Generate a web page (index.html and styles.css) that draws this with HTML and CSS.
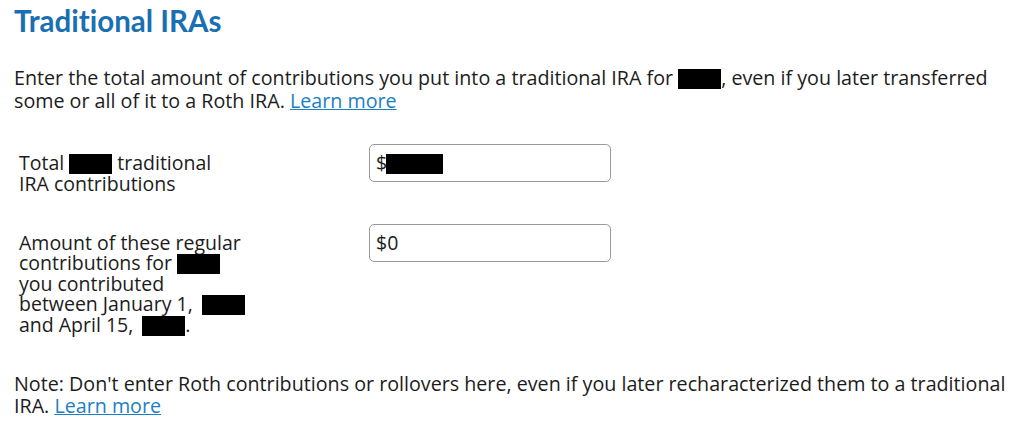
FILE: index.html
```html
<!DOCTYPE html>
<html lang="en">
<head>
    <meta charset="UTF-8">
    <title>Traditional IRAs</title>
    <meta name="viewport" content="width=device-width, initial-scale=1.0">
    <link rel="stylesheet" href="styles.css">
</head>
<body>
    <main class="page">
        <h1>Traditional IRAs</h1>
        <p class="intro">
            Enter the total amount of contributions you put into a traditional IRA for <span class="redact redact-year"></span>, even if you later transferred<br>
            some or all of it to a Roth IRA. <a href="#">Learn more</a>
        </p>

        <!-- contribution rows -->
        <div class="field-row first">
            <label class="field-label" for="totalContrib">Total <span class="redact"></span> traditional<br>IRA contributions</label>
            <div class="field-box" id="totalContrib">$<span class="redact redact-amount"></span></div>
        </div>
        <div class="field-row">
            <label class="field-label" for="earlyContrib">Amount of these regular<br>contributions for <span class="redact"></span><br>you contributed<br>between January 1, <span class="redact redact-wide"></span><br>and April 15, <span class="redact redact-wide"></span>.</label>
            <div class="field-box" id="earlyContrib">$0</div>
        </div>

        <p class="note">
            Note: Don't enter Roth contributions or rollovers here, even if you later recharacterized them to a traditional<br>
            IRA. <a href="#">Learn more</a>
        </p>
    </main>
</body>
</html>
```

FILE: styles.css
```css
:root {
    --title-blue: #1a6fb3;
    --link-blue: #1d7fc0;
    --text: #1c1c1c;
    --box-border: #9a9a9a;
}
body {
    margin: 0;
    background: #fff;
    color: var(--text);
    font-family: "Open Sans", Lato, sans-serif;
    font-variant-ligatures: none;
}
.page {
    padding: 0 14px;
}
h1 {
    margin: 0;
    padding-top: 2px;
    font-family: Lato, sans-serif;
    font-size: 29.5px;
    font-weight: bold;
    line-height: 38px;
    color: var(--title-blue);
}
.intro {
    margin: 26px 0 0 0;
    font-size: 19.7px;
    line-height: 23px;
    white-space: nowrap;
}
a {
    color: var(--link-blue);
    text-decoration: underline;
}
/* redacted bits */
.redact {
    display: inline-block;
    width: 43px;
    height: 20px;
    background: #000;
    vertical-align: -4px;
}
.redact-wide {
    margin-left: 4px;
}
.redact-amount {
    width: 57px;
    margin-left: -1px;
}
.field-row {
    display: grid;
    grid-template-columns: 355px 242px;
    margin-top: 30px;
}
.field-row.first {
    margin-top: 32px;
}
.field-label {
    padding: 9px 0 0 5px;
    font-size: 19.5px;
    line-height: 20px;
}
.field-box {
    height: 36px;
    border: 1px solid var(--box-border);
    border-radius: 5px;
    padding: 0 6px;
    font-size: 19.5px;
    line-height: 36px;
}
.note {
    margin: 37px 0 0 0;
    font-size: 19.7px;
    line-height: 22px;
    white-space: nowrap;
}
```
